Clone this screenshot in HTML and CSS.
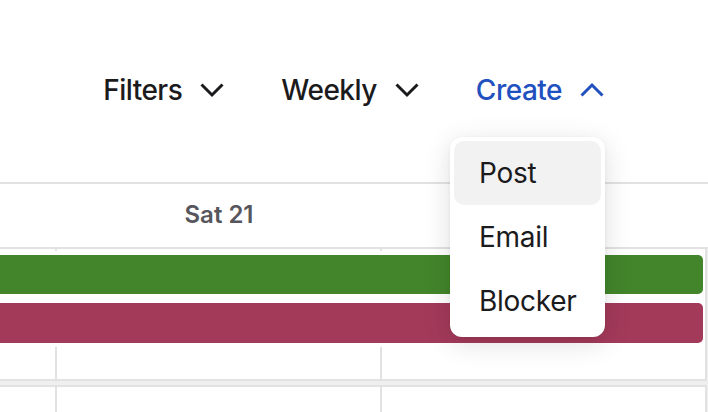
FILE: index.html
```html
<!DOCTYPE html>
<html>
<head>
<meta charset="utf-8">
<link rel="stylesheet" href="styles.css">
</head>
<body>
<div class="toolbar">
  <button class="tb-item">
    <span>Filters</span>
    <svg class="chev" viewBox="0 0 24 16" width="24" height="16"><polyline points="1.5,2.5 12,13 22.5,2.5"/></svg>
  </button>
  <button class="tb-item">
    <span>Weekly</span>
    <svg class="chev" viewBox="0 0 24 16" width="24" height="16"><polyline points="1.5,2.5 12,13 22.5,2.5"/></svg>
  </button>
  <div class="tb-wrap">
    <button class="tb-item tb-active">
      <span>Create</span>
      <svg class="chev" viewBox="0 0 24 16" width="24" height="16"><polyline points="1.5,13.5 12,3 22.5,13.5"/></svg>
    </button>
    <div class="menu">
      <div class="menu-item is-hover">Post</div>
      <div class="menu-item">Email</div>
      <div class="menu-item">Blocker</div>
    </div>
  </div>
</div>

<div class="cal">
  <div class="cal-head">
    <div class="head-cell"></div>
    <div class="head-cell">Sat 21</div>
    <div class="head-cell"></div>
  </div>
  <div class="week">
    <div class="cells">
      <div class="cell"></div>
      <div class="cell"></div>
      <div class="cell"></div>
    </div>
    <div class="events">
      <div class="bar bar-green"></div>
      <div class="bar bar-red"></div>
    </div>
  </div>
  <div class="week week-next">
    <div class="cells">
      <div class="cell"></div>
      <div class="cell"></div>
      <div class="cell"></div>
    </div>
  </div>
</div>
</body>
</html>
```

FILE: styles.css
```css
* { box-sizing: border-box; }
html, body { margin: 0; padding: 0; background: #fff; overflow: hidden; }
body {
  width: 708px;
  height: 412px;
  font-family: Inter, "Noto Sans", "Liberation Sans", sans-serif;
  color: #1b1b1d;
}

.toolbar {
  display: flex;
  justify-content: flex-end;
  align-items: center;
  gap: 57px;
  height: 60px;
  margin-top: 60px;
  padding-right: 104px;
}
.tb-item {
  display: flex;
  align-items: center;
  gap: 18px;
  background: none;
  border: 0;
  padding: 0;
  font-family: inherit;
  font-size: 28px;
  font-weight: 500;
  color: #1b1b1d;
  letter-spacing: -0.5px;
}
.chev {
  width: 24px;
  height: 16px;
  fill: none;
  stroke: currentColor;
  stroke-width: 3;
}
.tb-active { color: #2150bf; }
.tb-wrap { position: relative; }

.menu {
  position: absolute;
  right: -1px;
  top: 64px;
  width: 155px;
  padding: 4px;
  background: #fff;
  border-radius: 12px;
  box-shadow: 0 6px 28px rgba(0, 0, 0, 0.13), 0 1px 4px rgba(0, 0, 0, 0.05);
  z-index: 10;
}
.menu-item {
  height: 64px;
  display: flex;
  align-items: center;
  padding-left: 25px;
  font-size: 28px;
  font-weight: 400;
  letter-spacing: -0.3px;
  color: #1b1b1d;
  border-radius: 10px;
}
.menu-item.is-hover { background: #f2f2f2; }

.cal {
  margin-top: 62px;
  background: #efefef;
}
.cal-head {
  display: grid;
  grid-template-columns: 55px 328px 325px;
  height: 67px;
  background: #fff;
  border-top: 2px solid #e2e2e2;
  border-bottom: 2px solid #e2e2e2;
}
.head-cell {
  display: flex;
  align-items: center;
  justify-content: center;
  font-size: 24px;
  font-weight: 600;
  color: #56565c;
  padding-bottom: 2px;
}
.week {
  position: relative;
  width: 707px;
  background: #fff;
  border-right: 2px solid #e2e2e2;
  border-bottom: 2px solid #e2e2e2;
}
.week-next {
  margin-top: 4px;
  border-top: 2px solid #e2e2e2;
  border-bottom: 0;
}
.cells {
  display: grid;
  grid-template-columns: 55px 325px 325px;
  height: 130px;
}
.week-next .cells { height: 40px; }
.cell + .cell { border-left: 2px solid #e2e2e2; }

.events {
  position: absolute;
  top: 2px;
  left: 0;
  right: 0;
  height: 96px;
  background: #fff;
  padding: 4px 2px 4px 0;
  display: flex;
  flex-direction: column;
  gap: 9px;
}
.bar {
  height: 39px;
  border-radius: 0 5px 5px 0;
}
.bar-red { height: 40px; }
.bar-green { background: #42852b; }
.bar-red { background: #a33a5a; }
```
